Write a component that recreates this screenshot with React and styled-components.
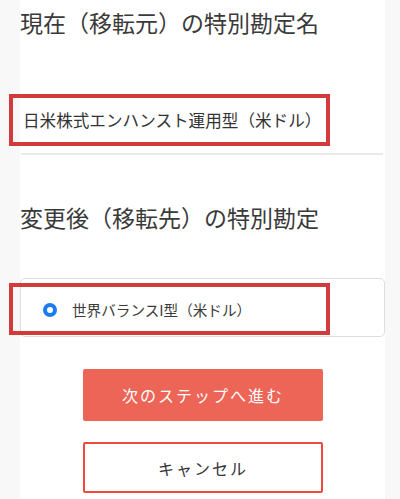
import React from 'react';
import styled, { createGlobalStyle } from 'styled-components';

const GlobalStyle = createGlobalStyle`
  html, body {
    margin: 0;
    padding: 0;
    background: #f8f8f8;
    font-family: "Noto Sans CJK JP", "Noto Sans", sans-serif;
  }
`;

const Panel = styled.div`
  box-sizing: border-box;
  width: 365px;
  min-height: 499px;
  margin-left: 20px;
  background: #ffffff;
  display: flex;
  flex-direction: column;
`;

const Heading = styled.h2`
  margin: ${p => p.top || 0}px 0 0;
  font-size: 23px;
  font-weight: 400;
  line-height: 45px;
  color: #3a3a3a;
  white-space: nowrap;
`;

const NameRow = styled.div`
  position: relative;
  height: 52px;
  margin-top: 49px;
  display: flex;
  align-items: center;
  padding-left: 3px;
  font-size: 16.6px;
  color: #333333;
  white-space: nowrap;
`;

const Highlight = styled.div`
  position: absolute;
  top: ${p => p.top || 0}px;
  left: ${p => p.left || -11}px;
  width: 321px;
  height: 52px;
  box-sizing: border-box;
  border: 4px solid #d23b3b;
  pointer-events: none;
`;

const Divider = styled.div`
  height: 2px;
  margin: 7px 2px 0 1px;
  background: #e9e9e9;
`;

const RadioCard = styled.label`
  position: relative;
  box-sizing: border-box;
  height: 59px;
  margin-top: 38px;
  border: 1px solid #dedede;
  border-radius: 5px;
  padding: 4px 0 0 22px;
  display: flex;
  align-items: center;
  gap: 15px;
  font-size: 14.6px;
  color: #3a3a3a;
  white-space: nowrap;
`;

const RadioDot = styled.span`
  box-sizing: border-box;
  width: 14px;
  height: 14px;
  border-radius: 50%;
  border: 4px solid #1a7cf0;
  background: #fff;
  flex-shrink: 0;
`;

const Actions = styled.div`
  margin-top: 32px;
  display: flex;
  flex-direction: column;
  align-items: center;
  gap: 21px;
  padding-left: 1px;
`;

const Button = styled.button`
  box-sizing: border-box;
  width: 240px;
  height: ${p => (p.primary ? 52 : 51)}px;
  border-radius: 2px;
  font-family: inherit;
  font-size: 16px;
  letter-spacing: 2px;
  cursor: pointer;
  background: ${p => (p.primary ? '#ec6556' : '#ffffff')};
  color: ${p => (p.primary ? '#ffffff' : '#333333')};
  border: ${p => (p.primary ? 'none' : '2px solid #f04a3e')};
`;

export default function App() {
  return (
    <>
      <GlobalStyle />
      <Panel>
        <Heading top={0}>現在（移転元）の特別勘定名</Heading>
        <NameRow>
          日米株式エンハンスト運用型（米ドル）
          <Highlight top={0} left={-11} />
        </NameRow>
        <Divider />
        <Heading top={40}>変更後（移転先）の特別勘定</Heading>
        <RadioCard>
          <RadioDot />
          世界バランスI型（米ドル）
          <Highlight top={4} left={-12} />
        </RadioCard>
        <Actions>
          <Button primary>次のステップへ進む</Button>
          <Button>キャンセル</Button>
        </Actions>
      </Panel>
    </>
  );
}
